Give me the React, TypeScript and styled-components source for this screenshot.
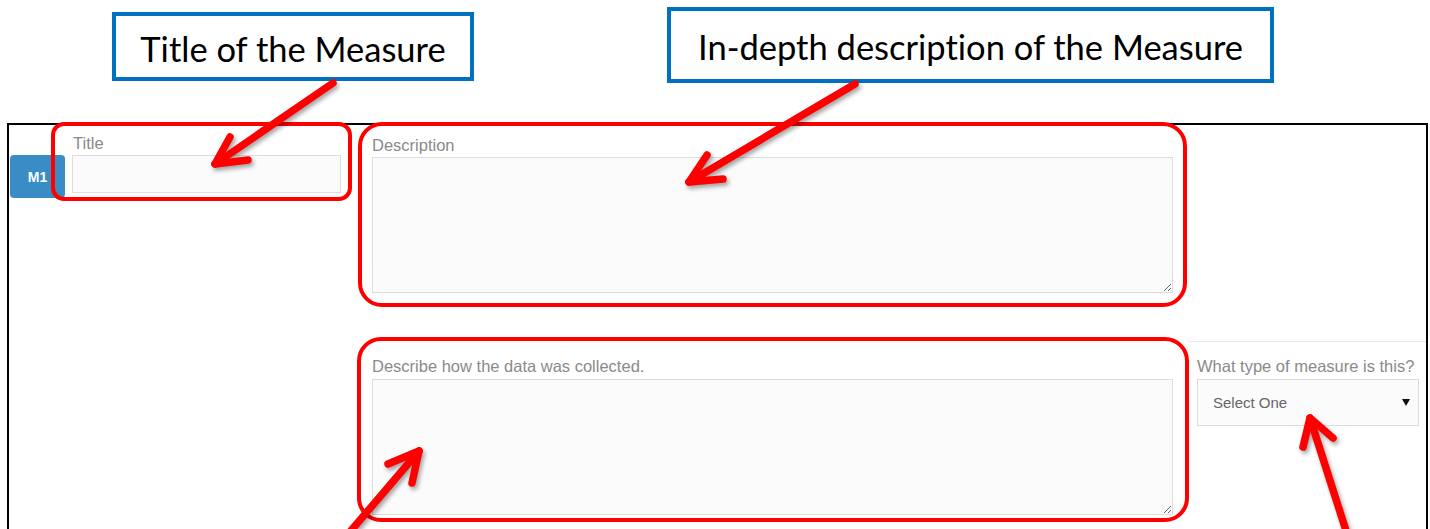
import { FC } from "react";
import styled, { createGlobalStyle } from "styled-components";

const GlobalStyle = createGlobalStyle`
  html, body {
    margin: 0;
    padding: 0;
    background: #fff;
    overflow: hidden;
  }
  * {
    box-sizing: border-box;
  }
`;

const Page = styled.div`
  position: relative;
  width: 1430px;
  height: 529px;
  overflow: hidden;
  font-family: "Liberation Sans", Arial, sans-serif;
`;

/* callout strip above the form */
const CalloutBar = styled.div`
  display: flex;
  align-items: flex-start;
  height: 123px;
`;

const Callout = styled.div<{ left: number; top: number; w: number; h: number }>`
  display: flex;
  align-items: center;
  justify-content: center;
  margin-left: ${({ left }) => left}px;
  margin-top: ${({ top }) => top}px;
  width: ${({ w }) => w}px;
  height: ${({ h }) => h}px;
  padding-top: 3px;
  border: 4px solid #0070c0;
  background: #fff;
  font-family: Lato, "Open Sans", sans-serif;
  font-size: 34.5px;
  font-variant-ligatures: none;
  color: #000;
  white-space: nowrap;
`;

/* the captured form */
const Frame = styled.div`
  margin-left: 7px;
  width: 1421px;
  height: 420px;
  border: 2px solid #000;
  border-bottom: none;
`;

const Row = styled.div<{ top: number }>`
  display: flex;
  align-items: flex-start;
  margin-top: ${({ top }) => top}px;
`;

const Badge = styled.div`
  flex-shrink: 0;
  display: flex;
  align-items: center;
  justify-content: center;
  width: 55px;
  height: 43px;
  margin: 33px -14px 0 1px;
  border-radius: 4px;
  background: #3a8dc4;
  color: #fff;
  font-weight: bold;
  font-size: 14px;
`;

const Highlight = styled.div<{ w: number; h: number; radius: number; pad: string; left: number }>`
  flex-shrink: 0;
  display: flex;
  flex-direction: column;
  width: ${({ w }) => w}px;
  height: ${({ h }) => h}px;
  margin-left: ${({ left }) => left}px;
  padding: ${({ pad }) => pad};
  border: 4px solid #ff0000;
  border-radius: ${({ radius }) => radius}px;
`;

const Label = styled.label<{ gap: number; indent?: number }>`
  display: block;
  margin: 0 0 ${({ gap }) => gap}px ${({ indent }) => indent ?? 0}px;
  font-size: 16.5px;
  line-height: 16px;
  color: #8a8a8a;
  white-space: nowrap;
`;

const TextInput = styled.input`
  display: block;
  width: 100%;
  height: 38px;
  margin: 0;
  padding: 6px 10px;
  border: 1px solid #dddddd;
  border-radius: 0;
  background: #fbfbfb;
  font: inherit;
  outline: none;
`;

const TextArea = styled.textarea`
  display: block;
  width: 100%;
  height: 136px;
  margin: 0;
  padding: 6px 10px;
  border: 1px solid #dddddd;
  border-radius: 0;
  background: #fbfbfb;
  font: inherit;
  resize: vertical;
  outline: none;
`;

const TypeField = styled.div`
  flex: 1;
  min-width: 0;
  margin-top: 4px;
  padding: 16px 0 0 8px;
  border-top: 1px solid #e8e8e8;
`;

const SelectWrap = styled.div`
  position: relative;
  width: 222px;
  height: 47px;
`;

const Select = styled.select`
  appearance: none;
  display: block;
  width: 100%;
  height: 100%;
  margin: 0;
  padding: 0 30px 0 15px;
  border: 1px solid #dddddd;
  border-radius: 0;
  background: #fbfbfb;
  font-family: "Liberation Sans", Arial, sans-serif;
  font-size: 15px;
  color: #666;
  outline: none;
`;

const Caret = styled.svg`
  position: absolute;
  right: 9px;
  top: 20px;
  pointer-events: none;
`;

/* red annotation arrows drawn over the page */
const Arrows = styled.svg`
  position: absolute;
  top: 0;
  left: 0;
  pointer-events: none;
  filter: drop-shadow(2px 3px 2px rgba(0, 0, 0, 0.35));
`;

type ArrowSpec = { from: [number, number]; tip: [number, number]; wings: [[number, number], [number, number]] };

const arrows: ArrowSpec[] = [
  { from: [333, 83], tip: [215, 164], wings: [[230, 137], [248, 160]] },
  { from: [855, 84], tip: [689, 182], wings: [[707, 155], [723, 179]] },
  { from: [343, 540], tip: [419, 451], wings: [[388, 464], [412, 483]] },
  { from: [1349, 540], tip: [1310, 418], wings: [[1303, 447], [1333, 438]] },
];

const Arrow: FC<ArrowSpec> = ({ from, tip, wings }) => (
  <g stroke="#ff0000" strokeWidth={7.5} strokeLinecap="round" strokeLinejoin="round" fill="none">
    <line x1={from[0]} y1={from[1]} x2={tip[0]} y2={tip[1]} />
    <polyline points={`${wings[0][0]},${wings[0][1]} ${tip[0]},${tip[1]} ${wings[1][0]},${wings[1][1]}`} />
  </g>
);

export default function App() {
  return (
    <Page>
      <GlobalStyle />
      <CalloutBar>
        <Callout left={112} top={12} w={362} h={69}>
          Title of the Measure
        </Callout>
        <Callout left={193} top={7} w={607} h={76}>
          In-depth description of the Measure
        </Callout>
      </CalloutBar>

      <Frame>
        <Row top={-3}>
          <Badge>M1</Badge>
          <Highlight w={301} h={79} radius={13} pad="9px 7px 4px 17px" left={0}>
            <Label gap={4} indent={1}>Title</Label>
            <TextInput />
          </Highlight>
          <Highlight w={829} h={185} radius={24} pad="11px 10px 10px 10px" left={6}>
            <Label gap={4}>Description</Label>
            <TextArea />
          </Highlight>
        </Row>

        <Row top={30}>
          <Highlight w={832} h={185} radius={24} pad="17px 12px 3px 11px" left={348}>
            <Label gap={5}>Describe how the data was collected.</Label>
            <TextArea />
          </Highlight>
          <TypeField>
            <Label gap={5}>What type of measure is this?</Label>
            <SelectWrap>
              <Select defaultValue="">
                <option value="">Select One</option>
                <option value="outcome">Outcome</option>
                <option value="process">Process</option>
              </Select>
              <Caret width="8" height="7" viewBox="0 0 8 7">
                <path d="M0 0 H8 L4 7 Z" fill="#111" />
              </Caret>
            </SelectWrap>
          </TypeField>
        </Row>
      </Frame>

      <Arrows width="1430" height="529" viewBox="0 0 1430 529">
        {arrows.map((a, i) => (
          <Arrow key={i} {...a} />
        ))}
      </Arrows>
    </Page>
  );
}
